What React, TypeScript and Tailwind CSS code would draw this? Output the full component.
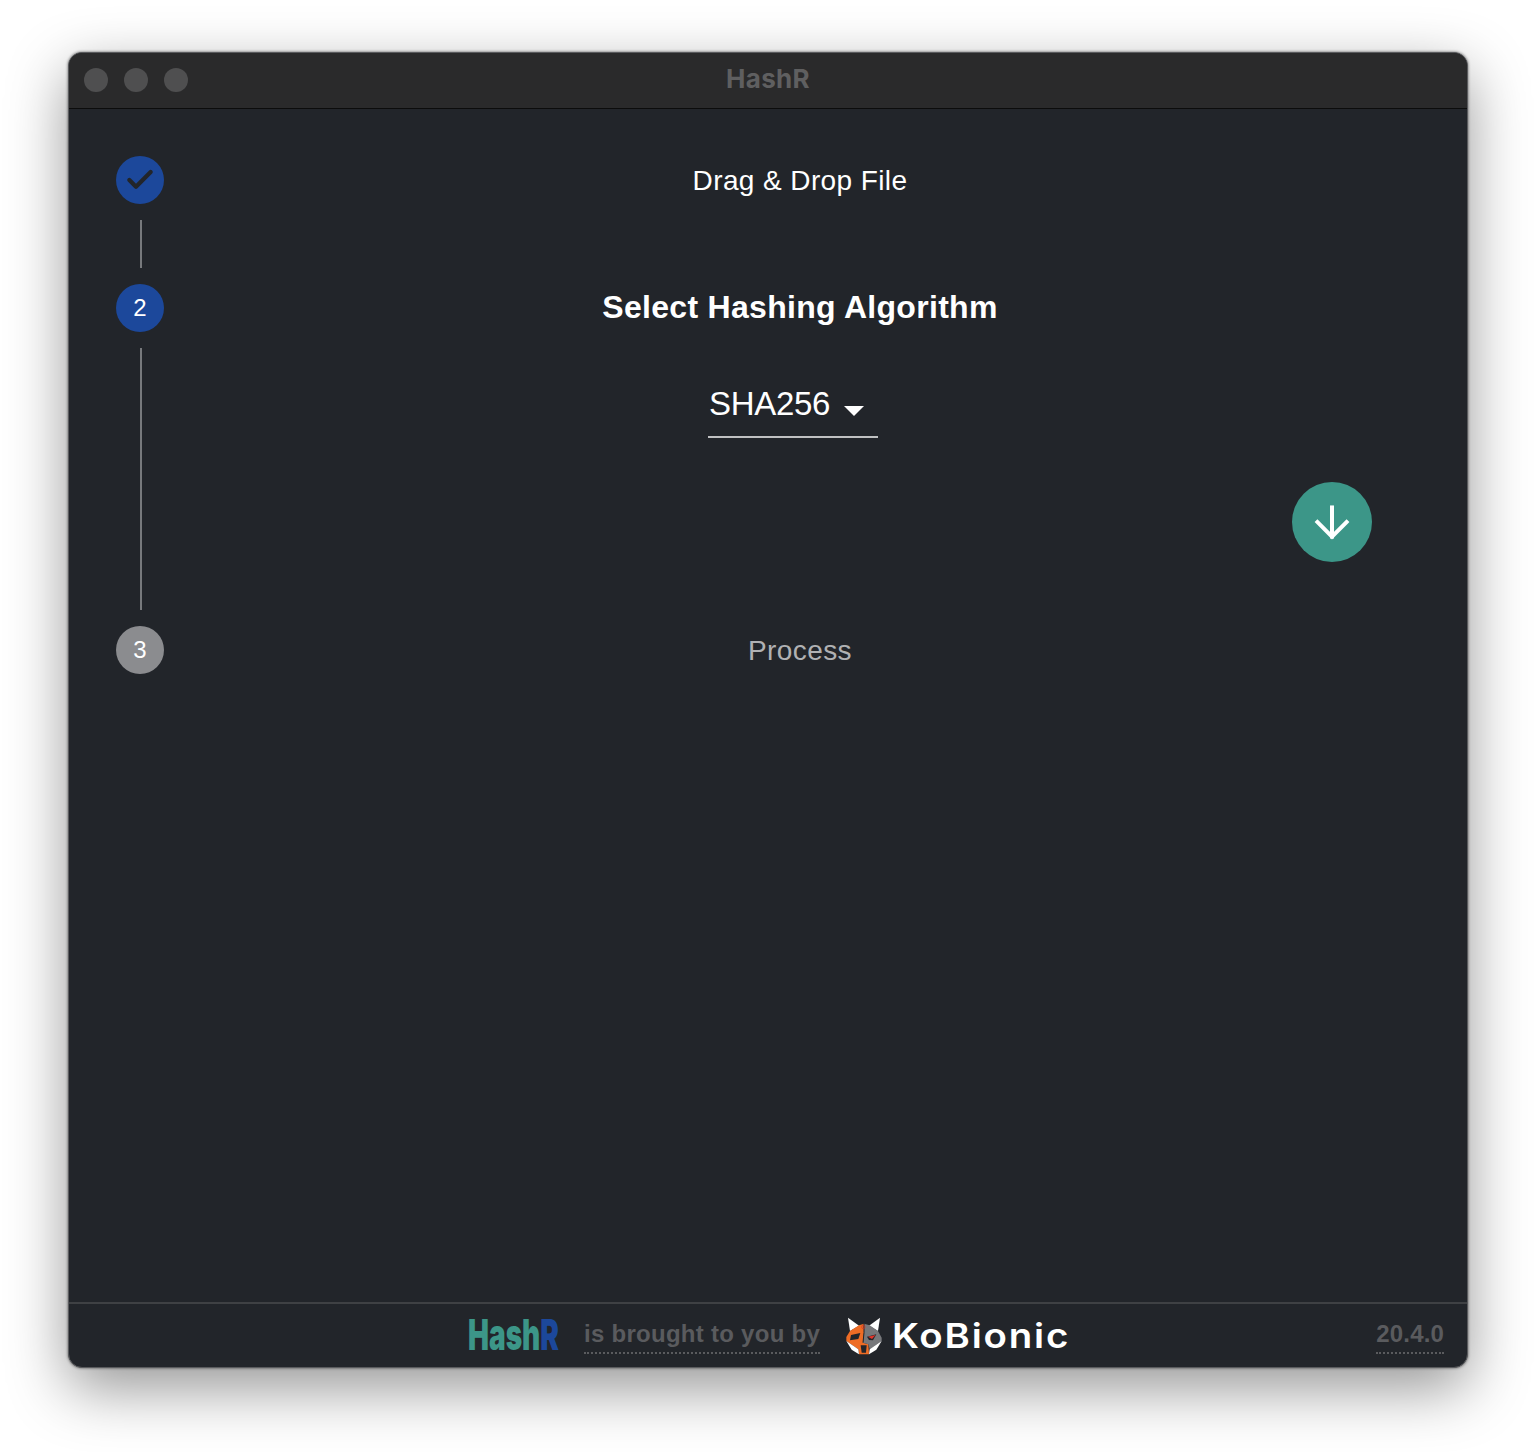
import { ArrowDown, Check } from "lucide-react"

function FoxLogo() {
	return (
		<svg width="50" height="48" viewBox="0 0 150 144" className="shrink-0">
			{/* Ears */}
			<path d="M27 20 L60 44 L33 60 Z" fill="#fff" />
			<path d="M123 20 L90 44 L117 60 Z" fill="#fff" />
			{/* Left and right halves of the face */}
			<path d="M33 60 L60 43 L75 38 L75 65 L72 95 L88 100 L90 130 L60 130 L58 115 L22 90 L22 78 Z" fill="#ee6c25" />
			<path d="M75 38 L92 43 L117 60 L128 80 L128 90 L92 115 L88 100 L72 95 L75 65 Z" fill="#77787b" />
			{/* Jaw */}
			<path d="M22 90 L58 115 L60 130 L38 116 Z" fill="#fff" />
			<path d="M128 90 L92 115 L90 130 L112 116 Z" fill="#fff" />
			{/* Mouth and eyes */}
			<path d="M65 103 L83 103 L81 125 L68 125 Z" fill="#22252a" />
			<path d="M36 72 L64 66 L58 84 L33 88 Z" fill="#22252a" />
			<path d="M84 77 L112 70 L102 88 L90 87 Z" fill="#22252a" />
			<path d="M87 77 L110 72 L99 84 Z" fill="#e2352b" />
			{/* Seam and forehead mark */}
			<path d="M75 38 L75 65 L72 95" fill="none" stroke="#22252a" strokeWidth="3" />
			<circle cx="73" cy="48" r="5" fill="none" stroke="#d8342a" strokeWidth="2" />
		</svg>
	)
}

export default function App() {
	return (
		// Page with the desktop shadow
		<div className="w-full h-[1452px] bg-white pt-[52px] px-[68px] font-['Liberation_Sans',sans-serif]">
			{/* Window */}
			<div className="w-[1400px] h-[1316px] flex flex-col rounded-[14px] overflow-hidden bg-[#22252a] border border-[#5a5b5e] shadow-[0_20px_60px_rgba(0,0,0,0.42),0_0_3px_rgba(0,0,0,0.6)]">
				{/* Title bar */}
				<div className="h-[56px] shrink-0 flex items-center relative bg-[#2a2a2b] border-b border-[#0c0c0c]">
					<div className="flex gap-4 pl-[15px] -mt-px">
						<div className="size-6 rounded-full bg-[#4f4f50]" />
						<div className="size-6 rounded-full bg-[#4f4f50]" />
						<div className="size-6 rounded-full bg-[#4f4f50]" />
					</div>
					<p className="absolute inset-x-0 -top-[2px] h-full leading-[56px] text-center text-[26px] font-bold text-[#5f5f60] font-['Inter',sans-serif] tracking-[0.3px]">
						HashR
					</p>
				</div>

				{/* Stepper */}
				<div className="flex-1 flex flex-col pt-[47px] pl-[47px]">
					{/* Step 1 */}
					<div className="flex items-center h-12">
						<div className="size-12 rounded-full bg-[#1c489b] flex items-center justify-center">
							<Check className="size-8 text-[#22252a]" strokeWidth={3.2} />
						</div>
						<p className="flex-1 text-center text-[28px] text-white pr-[31px] pt-[2px] tracking-[0.4px]">
							Drag &amp; Drop File
						</p>
					</div>
					<div className="w-[2px] h-12 bg-[#77797c] ml-6 mt-4 mb-4" />

					{/* Step 2 */}
					<div className="flex items-center h-12">
						<div className="size-12 rounded-full bg-[#1c489b] flex items-center justify-center text-2xl text-white">
							2
						</div>
						<p className="flex-1 text-center text-[32px] font-bold text-white pr-[31px] pb-[2px] tracking-[0.3px]">
							Select Hashing Algorithm
						</p>
					</div>
					<div className="flex h-[294px]">
						<div className="w-[2px] h-[262px] bg-[#77797c] ml-6 mt-4" />
						<div className="flex-1 relative">
							{/* Algorithm select */}
							<div className="w-[170px] h-[59px] ml-[566px] mt-[47px] flex items-center border-b-2 border-[#c0c1c2] pl-px pb-2">
								<span className="text-[33px] text-white tracking-[-0.3px]">SHA256</span>
								<svg width="20" height="10" viewBox="0 0 20 10" className="ml-[14px] mt-[14px]">
									<path d="M0 0 H20 L10 10 Z" fill="#fff" />
								</svg>
							</div>
							{/* Next button */}
							<div className="absolute left-[1150px] top-[150px] size-20 rounded-full bg-[#3c9688] flex items-center justify-center">
								<ArrowDown className="size-[50px] text-white" strokeWidth={1.9} strokeLinecap="square" strokeLinejoin="miter" />
							</div>
						</div>
					</div>

					{/* Step 3 */}
					<div className="flex items-center h-12">
						<div className="size-12 rounded-full bg-[#8b8c8f] flex items-center justify-center text-2xl text-white">
							3
						</div>
						<p className="flex-1 text-center text-[28px] text-[#b0b1b3] pr-[31px] pt-[2px] tracking-[0.4px]">
							Process
						</p>
					</div>
				</div>

				{/* Footer */}
				<div className="h-[65px] shrink-0 flex items-center relative border-t-2 border-[#3f4144]">
					<div className="absolute left-[399px] top-[10px] h-[40px] flex items-center">
						<p className="text-[43px] font-black leading-none origin-left scale-x-[0.65] text-[#3c9688] font-['Inter',sans-serif] whitespace-nowrap">
							Hash<span className="text-[#1c489b]">R</span>
						</p>
					</div>
					<p className="absolute left-[515px] top-[13px] text-[24px] leading-[34px] pb-px font-bold text-[#5a5b5e] border-b-2 border-dotted border-[#5a5b5e] tracking-[0.27px]">
						is brought to you by
					</p>
					<div className="absolute left-[770px] top-[6px] flex items-center gap-[3px]">
						<FoxLogo />
						<p className="text-[34px] leading-[48px] pt-[2px] font-semibold text-white font-['Inter',sans-serif] tracking-[1.6px] origin-left scale-x-[1.13]">
							KoBionic
						</p>
					</div>
					<p className="absolute right-[23px] top-[13px] text-[24px] leading-[34px] pb-px font-bold text-[#5a5b5e] border-b-2 border-dotted border-[#5a5b5e] tracking-[0.15px]">
						20.4.0
					</p>
				</div>
			</div>
		</div>
	)
}
